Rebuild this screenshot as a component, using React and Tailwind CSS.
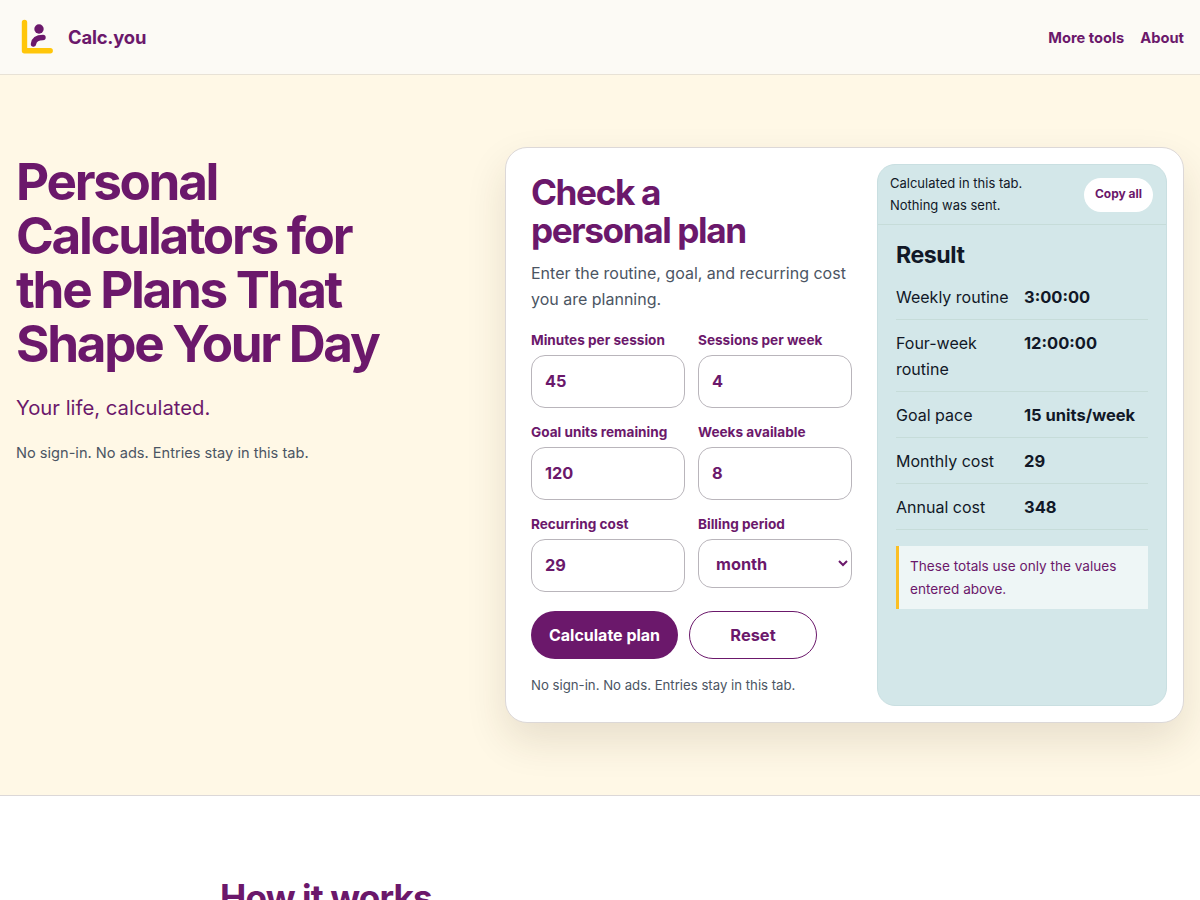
import React from "react";

const fields = [
  { label: "Minutes per session", value: "45" },
  { label: "Sessions per week", value: "4" },
  { label: "Goal units remaining", value: "120" },
  { label: "Weeks available", value: "8" },
  { label: "Recurring cost", value: "29" },
];

const results = [
  { label: "Weekly routine", value: "3:00:00" },
  { label: "Four-week routine", value: "12:00:00" },
  { label: "Goal pace", value: "15 units/week" },
  { label: "Monthly cost", value: "29" },
  { label: "Annual cost", value: "348" },
];

const Logo = () => (
  <svg width="40" height="40" viewBox="0 0 40 40" fill="none" className="shrink-0">
    <path d="M8.5 5.5V33.7H34.2" stroke="#ffc60a" strokeWidth="5.4" strokeLinecap="round" strokeLinejoin="round" />
    <circle cx="23" cy="12" r="4.7" fill="#6b186b" />
    <path d="M17.5 27C18 23 21 20.5 27 20.5" stroke="#6b186b" strokeWidth="5.4" strokeLinecap="round" />
  </svg>
);

const Field = ({ label, value }) => (
  <label className="block">
    <span className="block text-[13.6px] leading-[22px] font-bold text-[#6b186b] mb-[4px]">{label}</span>
    <input
      defaultValue={value}
      className="block w-full h-[53px] px-[13px] pb-[2px] border border-[#b9b5bb] rounded-[14px] bg-white text-[16.32px] font-bold text-[#6b186b] outline-none"
    />
  </label>
);

const App = () => {
  return (
    <div className="h-screen overflow-hidden bg-white font-['Inter',sans-serif]">
      <header className="h-[75px] px-4 flex items-center justify-between bg-[#fcfaf5] border-b border-[#e8e2d6]">
        <a className="flex items-center gap-3">
          <Logo />
          <span className="pt-[2px] text-[18.4px] font-bold tracking-[-0.01em] text-[#6b186b]">Calc.you</span>
        </a>
        <nav className="pt-[2px] flex gap-4 text-[14.7px] font-bold text-[#6b186b]">
          <a>More tools</a>
          <a>About</a>
        </nav>
      </header>

      <section className="bg-[#fff8e6] border-b border-[#dcd8d8] px-4 pt-[72px] pb-[72px] flex justify-between items-start">
        <div className="w-[400px] pt-[7px]">
          <h1 className="text-[51.2px] leading-[54px] font-bold tracking-[-0.045em] text-[#6b186b]">
            Personal Calculators for the Plans That Shape Your Day
          </h1>
          <p className="mt-[24px] text-[20.3px] leading-[28px] text-[#6b186b]">Your life, calculated.</p>
          <p className="mt-[20px] text-[14.6px] leading-[22px] text-[#4b5563]">
            No sign-in. No ads. Entries stay in this tab.
          </p>
        </div>

        <div className="w-[679px] h-[576px] flex gap-[25px] pl-[25px] pr-4 py-4 bg-white border border-[#dcd8d8] rounded-[22px] shadow-[0_18px_40px_rgba(60,40,20,0.12)]">
          <div className="w-[321px] pt-[9px]">
            <h2 className="text-[35.2px] leading-[38px] font-bold tracking-[-0.04em] text-[#6b186b]">
              Check a<br />personal plan
            </h2>
            <p className="mt-[11px] text-base leading-[26px] text-[#4b5563]">
              Enter the routine, goal, and recurring cost you are planning.
            </p>
            <div className="mt-[17px] grid grid-cols-2 gap-x-[13px] gap-y-[13px]">
              {fields.map((field) => (
                <Field key={field.label} label={field.label} value={field.value} />
              ))}
              <label className="block">
                <span className="block text-[13.6px] leading-[22px] font-bold text-[#6b186b] mb-[4px]">Billing period</span>
                <select className="block w-full h-[49px] px-[13px] border border-[#b9b5bb] rounded-[14px] bg-white text-[16.32px] font-bold text-[#6b186b] outline-none">
                  <option>month</option>
                  <option>year</option>
                </select>
              </label>
            </div>
            <div className="mt-[19px] flex gap-[11px]">
              <button className="w-[147px] h-[48px] rounded-full bg-[#6b186b] text-base font-bold text-white">
                Calculate plan
              </button>
              <button className="w-[128px] h-[48px] rounded-full border border-[#6b186b] bg-white text-[16.4px] font-bold text-[#6b186b]">
                Reset
              </button>
            </div>
            <p className="mt-[16px] text-[13.2px] leading-[21px] text-[#4b5563]">
              No sign-in. No ads. Entries stay in this tab.
            </p>
          </div>

          <aside className="w-[290px] shrink-0 bg-[#d3e7e9] border border-[#c9dfe1] rounded-[18px] overflow-hidden">
            <div className="h-[60px] pl-3 pr-[13px] flex items-center justify-between border-b border-[#c6dcd9]">
              <p className="pb-[2px] text-[13px] leading-[22px] text-[#111827]">
                Calculated in this tab.<br />Nothing was sent.
              </p>
              <button className="w-[69px] h-[34px] pb-[2px] rounded-full bg-white text-xs font-bold text-[#6b186b]">
                Copy all
              </button>
            </div>
            <div className="px-[18px]">
              <h3 className="mt-[15px] text-[23.2px] leading-[30px] font-bold tracking-[-0.02em] text-[#111827]">Result</h3>
              <dl className="mt-[4px] grid grid-cols-[113px_1fr] gap-x-[15px]">
                {results.map((row) => (
                  <div key={row.label} className="col-span-2 grid grid-cols-subgrid pt-[10px] pb-[9px] border-b border-[#c6dcd9]">
                    <dt className="text-base leading-[26px] text-[#111827]">{row.label}</dt>
                    <dd className="text-[16.5px] leading-[26px] font-bold text-[#111827]">{row.value}</dd>
                  </div>
                ))}
              </dl>
              <p className="mt-4 pl-[11px] pr-3 pt-[9px] pb-2 border-l-[3px] border-[#fbbf24] bg-[#eef6f6] text-[13.6px] leading-[23px] text-[#6b186b]">
                These totals use only the values entered above.
              </p>
            </div>
          </aside>
        </div>
      </section>

      <section className="w-[760px] mx-auto pt-[79px]">
        <h2 className="text-[35.2px] leading-[44px] font-bold tracking-[-0.025em] text-[#6b186b]">How it works</h2>
      </section>
    </div>
  );
};

export default App;
